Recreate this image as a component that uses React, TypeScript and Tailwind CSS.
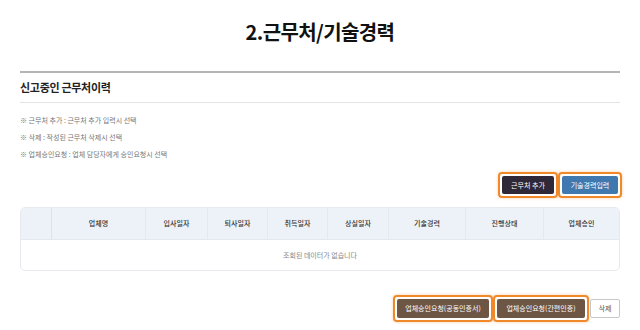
import React from "react";

const FONT = { fontFamily: '"Noto Sans CJK KR", "Noto Sans", sans-serif' };

const NOTES = [
  "※ 근무처 추가 : 근무처 추가 입력시 선택",
  "※ 삭제 : 작성된 근무처 삭제시 선택",
  "※ 업체승인요청 : 업체 담당자에게 승인요청시 선택",
];

const COLUMNS = ["업체명", "입사일자", "퇴사일자", "취득일자", "상실일자", "기술경력", "진행상태", "업체승인"];

function Highlight({ children }: { children: React.ReactNode }) {
  return (
    <div className="flex rounded-[4px] border-2 border-[#f0892a] p-[2px] shadow-[0_0_3px_rgba(240,137,42,0.45)]">
      {children}
    </div>
  );
}

export default function App() {
  return (
    <div className="h-[330px] w-[640px] overflow-hidden bg-white px-[20px]" style={FONT}>
      <div className="flex h-[64px] items-center justify-center">
        <h1 className="text-[20px] font-bold tracking-[-0.6px] text-[#111]">2.근무처/기술경력</h1>
      </div>

      <div className="mt-[7px] border-t-2 border-[#b4b4b4]">
        <div className="flex h-[30px] items-center border-b border-[#e4e4e4]">
          <h2 className="text-[11px] font-bold tracking-[-0.3px] text-[#222]">신고중인 근무처이력</h2>
        </div>
      </div>

      <ul className="pt-[9px]">
        {NOTES.map((n) => (
          <li key={n} className="h-[17px] text-[7px] leading-[17px] text-[#777]">
            {n}
          </li>
        ))}
      </ul>

      <div className="mr-[-2px] mt-[9px] flex justify-end">
        <Highlight>
          <button className="block h-[18px] w-[52px] rounded-[2px] bg-[#2e2838] text-[7px] leading-none text-white">
            근무처 추가
          </button>
        </Highlight>
        <Highlight>
          <button className="block h-[18px] w-[56px] rounded-[2px] bg-[#3f79b0] text-[7px] leading-none text-white">
            기술경력입력
          </button>
        </Highlight>
      </div>

      <div className="mt-[9px] overflow-hidden rounded-[5px] border border-[#e6e9ee]">
        <div className="grid h-[31px] grid-cols-[31px_94px_62px_60px_60px_61px_77px_78px_1fr] bg-[#edf2f9] text-[7px] font-medium text-[#333]">
          <div className="border-r border-[#dbe2ec]" />
          {COLUMNS.map((c, i) => (
            <div
              key={c}
              className={`flex items-center justify-center ${i < COLUMNS.length - 1 ? "border-r border-[#e3e9f1]" : ""}`}
            >
              {c}
            </div>
          ))}
        </div>
        <div className="flex h-[31px] items-center justify-center border-t border-[#e3e8ef] text-[7px] text-[#888]">
          조회된 데이터가 없습니다
        </div>
      </div>

      <div className="mr-[-2px] mt-[24px] flex items-center justify-end">
        <Highlight>
          <button className="block h-[19px] w-[92px] rounded-[2px] bg-[#6e5645] text-[7px] leading-none text-white">
            업체승인요청(공동인증서)
          </button>
        </Highlight>
        <Highlight>
          <button className="block h-[19px] w-[88px] rounded-[2px] bg-[#6e5645] text-[7px] leading-none text-white">
            업체승인요청(간편인증)
          </button>
        </Highlight>
        <button className="ml-[1px] mr-[2px] block h-[19px] w-[30px] rounded-[2px] border border-[#c8c8c8] bg-white text-[7px] leading-none text-[#555]">
          삭제
        </button>
      </div>
    </div>
  );
}
